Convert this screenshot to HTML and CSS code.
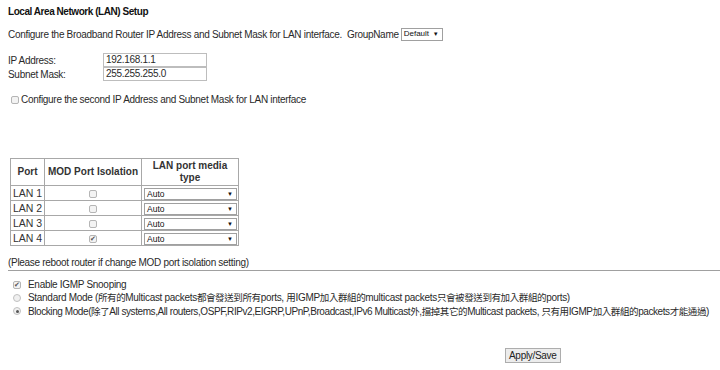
FILE: index.html
```html
<!DOCTYPE html>
<html>
<head>
<meta charset="utf-8">
<link rel="stylesheet" href="styles.css">
</head>
<body>
<div class="title">Local Area Network (LAN) Setup</div>
<div class="intro">Configure the Broadband Router IP Address and Subnet Mask for LAN interface.<span class="gap"></span>GroupName <span class="sel sel-group"><span class="sel-text">Default</span><span class="arrow">▼</span></span></div>
<div class="fields">
  <div class="field"><span class="label">IP Address:</span><span class="input">192.168.1.1</span></div>
  <div class="field"><span class="label">Subnet Mask:</span><span class="input">255.255.255.0</span></div>
</div>
<div class="second"><span class="cb"></span>Configure the second IP Address and Subnet Mask for LAN interface</div>
<table class="ports">
  <tr><th class="c-port">Port</th><th class="c-iso">MOD Port Isolation</th><th class="c-media">LAN port media<br>type</th></tr>
  <tr><td>LAN 1</td><td class="center"><span class="cb"></span></td><td><span class="sel sel-media"><span class="sel-text">Auto</span><span class="arrow">▼</span></span></td></tr>
  <tr><td>LAN 2</td><td class="center"><span class="cb"></span></td><td><span class="sel sel-media"><span class="sel-text">Auto</span><span class="arrow">▼</span></span></td></tr>
  <tr><td>LAN 3</td><td class="center"><span class="cb"></span></td><td><span class="sel sel-media"><span class="sel-text">Auto</span><span class="arrow">▼</span></span></td></tr>
  <tr><td>LAN 4</td><td class="center"><span class="cb checked">✔</span></td><td><span class="sel sel-media"><span class="sel-text">Auto</span><span class="arrow">▼</span></span></td></tr>
</table>
<div class="note">(Please reboot router if change MOD port isolation setting)</div>
<hr class="sep">
<div class="igmp">
  <div class="opt"><span class="cb checked">✔</span><span>Enable IGMP Snooping</span></div>
  <div class="opt"><span class="rb"></span><span>Standard Mode (<span class="zh">所有的</span>Multicast packets<span class="zh">都會發送到所有</span>ports, <span class="zh">用</span>IGMP<span class="zh">加入群組的</span>multicast packets<span class="zh">只會被發送到有加入群組的</span>ports)</span></div>
  <div class="opt tight"><span class="rb on"></span><span>Blocking Mode(<span class="zh">除了</span>All systems,All routers,OSPF,RIPv2,EIGRP,UPnP,Broadcast,IPv6 Multicast<span class="zh">外</span>,<span class="zh">擋掉其它的</span>Multicast packets, <span class="zh">只有用</span>IGMP<span class="zh">加入群組的</span>packets<span class="zh">才能通過</span>)</span></div>
</div>
<div class="actions"><span class="btn">Apply/Save</span></div>
</body>
</html>
```
FILE: styles.css
```css
html, body { background: #fff; }
body {
  margin: 0 0 0 8px;
  padding-top: 5px;
  font-family: "Liberation Sans", "Noto Sans CJK TC", sans-serif;
  font-size: 10px;
  letter-spacing: -0.3px;
  line-height: 13px;
  color: #2a2a2a;
  width: 712px;
  overflow: hidden;
}
.title { font-weight: bold; height: 13px; font-size: 10px; letter-spacing: -0.45px; color: #111; }
.intro { margin-top: 9px; height: 14px; display: flex; align-items: center; white-space: nowrap; }
.gap { display: inline-block; width: 5px; }
.sel {
  display: inline-flex; align-items: center; justify-content: space-between;
  border: 1px solid #a0a0a0; background: #fff; box-sizing: border-box;
  font-size: 8.5px; line-height: 10px; color: #111; letter-spacing: 0;
}
.sel-group { width: 42px; height: 13px; padding: 0 3px 0 2px; margin-left: 2px; font-size: 8px; }
.arrow { font-size: 6px; }
.fields { margin-top: 12px; }
.field { display: flex; align-items: center; height: 14px; }
.label { width: 95px; }
.input {
  width: 104px; height: 14px; box-sizing: border-box;
  border: 1px solid #bdbdbd; padding: 0 2px; line-height: 12px;
}
.second { margin-top: 12px; height: 13px; display: flex; align-items: center; margin-left: 3px; }
.second .cb { margin-right: 2px; }
.cb {
  display: inline-block; flex-shrink: 0; width: 8px; height: 8px; box-sizing: border-box;
  border: 1px solid #b5b5b5; border-radius: 2px; background: #f3f3f3;
  font-size: 7px; line-height: 6px; text-align: center; color: #555; letter-spacing: 0;
}
.ports {
  margin-top: 52px; margin-left: 2px;
  border-collapse: collapse; border: 1px solid #8a8a8a;
  table-layout: fixed; width: 228px;
}
.ports th, .ports td { border: 1px solid #a8a8a8; padding: 0 2px; height: 14px; white-space: nowrap; box-sizing: border-box; }
.ports th { font-weight: bold; font-size: 10px; letter-spacing: 0; line-height: 12px; height: 27px; text-align: center; color: #333; }
.c-port { width: 34px; }
.c-iso { width: 97px; }
.c-media { width: 97px; }
.ports td { font-size: 10.5px; letter-spacing: 0; line-height: 13px; height: 15px; color: #333; }
.ports td.center { text-align: center; }
.ports td .cb { vertical-align: middle; }
.sel-media { width: 93px; height: 12px; padding: 0 3px 0 2px; vertical-align: middle; }
.note { margin-top: 10px; height: 13px; }
.sep { margin: 1px -8px 0 0; border: 0; border-top: 1px solid #a0a0a0; height: 0; }
.igmp { margin-top: 7px; margin-left: 5px; }
.opt { display: flex; align-items: center; height: 13.3px; white-space: nowrap; }
.opt > :first-child { margin-right: 7px; }
.opt.tight { letter-spacing: -0.42px; }
.zh { font-family: "Noto Sans CJK TC", sans-serif; font-size: 9.5px; letter-spacing: -0.4px; }
.rb {
  display: inline-block; flex-shrink: 0; width: 8px; height: 8px; box-sizing: border-box;
  border: 1px solid #c0c0c0; border-radius: 50%; background: #f0f0f0; position: relative;
}
.rb.on::after {
  content: ""; position: absolute; left: 1.5px; top: 1.5px; width: 3px; height: 3px;
  border-radius: 50%; background: #555;
}
.actions { margin-top: 30px; padding-left: 497px; }
.btn {
  display: inline-block; height: 15px; box-sizing: border-box; padding: 0 3px;
  border: 1px solid #adadad; background: #ececec; line-height: 13px; color: #222;
}
```
